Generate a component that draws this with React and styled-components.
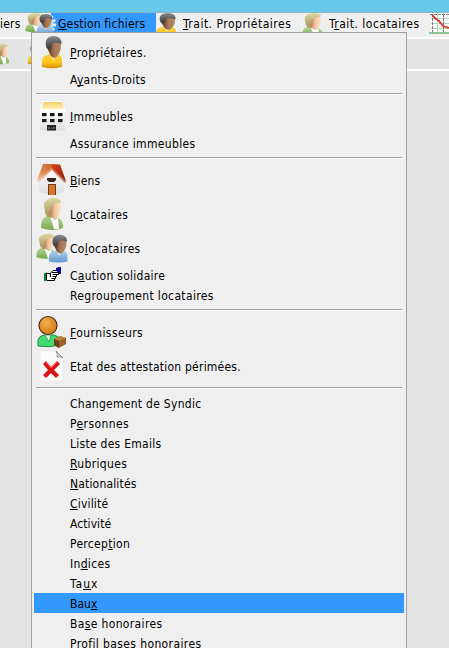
import React from "react";
import styled, { createGlobalStyle } from "styled-components";

const GlobalStyle = createGlobalStyle`
  * { box-sizing: border-box; }
  body { margin: 0; overflow: hidden; background: #e4e4e4; }
`;

const Window = styled.div`
  position: relative;
  width: 449px;
  height: 648px;
  overflow: hidden;
  background: #e4e4e4;
  color: #000;
  font: 12px/22px "DejaVu Sans Condensed", "DejaVu Sans", sans-serif;
  font-stretch: condensed;
  white-space: nowrap;
`;
const TitleStrip = styled.div`
  height: 13px;
  background: #66c9e9;
  border-bottom: 1px solid #8fb4c4;
`;
const MenuBar = styled.div`
  display: flex;
  height: 20px;
  background: #efefef;
`;
const BarCell = styled.div`
  flex: none;
  width: ${(p) => p.$w}px;
  height: 20px;
  padding-left: ${(p) => p.$pad || 0}px;
  overflow: ${(p) => (p.$spill ? "visible" : "hidden")};
  background: ${(p) => (p.$active ? "#3399ff" : "transparent")};
  letter-spacing: ${(p) => p.$ls || 0}px;
  svg { display: block; position: relative; }
`;
const BarGap = styled.div`
  height: 4px;
  background: #efefef;
`;
const ToolBar = styled.div`
  display: flex;
  height: 34px;
  border-top: 2px solid #fff;
  border-bottom: 2px solid #fff;
  svg { flex: none; margin-top: 4px; }
`;
const ToolSlot = styled.div`
  width: ${(p) => p.$w}px;
  overflow: hidden;
`;
const Menu = styled.div`
  position: absolute;
  left: 31px;
  top: 32px;
  width: 376px;
  height: 640px;
  padding: 2px;
  background: #efefef;
  border: 1px solid #a0a0a0;
`;
const Row = styled.div`
  display: flex;
  height: ${(p) => (p.$tall ? 34 : 20)}px;
  line-height: ${(p) => (p.$tall ? 36 : 22)}px;
  background: ${(p) => (p.$active ? "#3399ff" : "transparent")};
`;
const IconCell = styled.div`
  flex: none;
  width: 36px;
  height: 100%;
  padding-left: 2px;
  svg { display: block; }
`;
const Label = styled.span`
  letter-spacing: ${(p) => p.$ls}px;
`;
const Key = styled.span`
  text-decoration: underline;
  text-decoration-thickness: 1px;
  text-underline-offset: 1px;
  text-decoration-skip-ink: none;
`;
const Separator = styled.div`
  height: 10px;
  padding: 4px 2px 0;
  &::before {
    content: "";
    display: block;
    height: 1px;
    background: #a0a0a0;
    box-shadow: 0 1px #fff;
  }
`;
const GradientStore = styled.svg`
  position: absolute;
`;

const Gradients = () => (
  <GradientStore width="0" height="0">
    <defs>
      <linearGradient id="darkSkin"><stop offset="0" stopColor="#4e2d1c" /><stop offset=".55" stopColor="#a87959" /><stop offset="1" stopColor="#b58765" /></linearGradient>
      <linearGradient id="fairSkin"><stop offset="0" stopColor="#ad714e" /><stop offset=".5" stopColor="#f2c7a0" /><stop offset="1" stopColor="#ffe3c4" /></linearGradient>
      <linearGradient id="darkHair" x2="0" y2="1"><stop offset="0" stopColor="#8c8c8c" /><stop offset="1" stopColor="#303134" /></linearGradient>
      <linearGradient id="blond" x2="0" y2="1"><stop offset="0" stopColor="#ded9a5" /><stop offset="1" stopColor="#a9975c" /></linearGradient>
      <linearGradient id="gold" x2="0" y2="1"><stop offset="0" stopColor="#f7cf53" /><stop offset=".6" stopColor="#fcc71f" /><stop offset="1" stopColor="#d38f00" /></linearGradient>
      <linearGradient id="green" x2="0" y2="1"><stop offset="0" stopColor="#bad99a" /><stop offset="1" stopColor="#78a94e" /></linearGradient>
      <linearGradient id="blue" x2="0" y2="1"><stop offset="0" stopColor="#b9d7f2" /><stop offset="1" stopColor="#6297cc" /></linearGradient>
      <linearGradient id="roofYellow" x2="0" y2="1"><stop offset="0" stopColor="#f6cf6c" /><stop offset="1" stopColor="#fff0b4" /></linearGradient>
      <linearGradient id="wall" x2="0" y2="1"><stop offset="0" stopColor="#fff" /><stop offset="1" stopColor="#dcdcdf" /></linearGradient>
      <linearGradient id="roofOrange" x1="1" y1="0" x2="0" y2="1"><stop offset="0" stopColor="#c8642c" /><stop offset=".55" stopColor="#e08a50" /><stop offset="1" stopColor="#f3c29c" /></linearGradient>
      <linearGradient id="roofRed" x2="1" y2="1"><stop offset="0" stopColor="#d8451c" /><stop offset="1" stopColor="#861706" /></linearGradient>
      <radialGradient id="orangeHead" cx=".4" cy=".35"><stop offset="0" stopColor="#f7b24f" /><stop offset="1" stopColor="#dd8422" /></radialGradient>
    </defs>
  </GradientStore>
);

const OwnerShape = ({ coat = "gold" }) => (
  <g>
    <path d="M6 32V26q0-5 5-6l5-2 6 1q4 2 4 6v7q-10 2.500-20 0z" fill={`url(#${coat})`} />
    <path d="M14 19l3 6 5-6z" fill="#fff4c8" />
    <path d="M11 9q0-6 7-6 7 0 7 7 0 9-6 13-4 0-6-6-2-3-2-8z" fill="url(#darkSkin)" />
    <path d="M10.500 13Q8 5 13 2q5-2 9 0 4 2 3.500 7-5-2-9-1l-2 7-1-2-1 1z" fill="url(#darkHair)" />
  </g>
);
const TenantShape = () => (
  <g>
    <path d="M5 31q0-9 4-11l7-2 6 3q5 1 5 10-11 4-22 0z" fill="url(#green)" />
    <path d="M14 19l5 4 3-2 1 11h-5z" fill="#fff" />
    <path d="M9 16q-1-9 2-13l6-2 6 2v13l-4 5-8-1z" fill="url(#blond)" />
    <path d="M13 11q2-6 6-7 6 1 6 6 0 8-5 12-6-1-7-6z" fill="url(#fairSkin)" />
    <path d="M8 6q4-6 12-5 6 1 4.500 5-7-1-10 5l-1 7q-6-3-5.500-12z" fill="url(#blond)" />
  </g>
);
const Icon = ({ children, w = 32, h = 34, box = "0 0 32 34" }) => (
  <svg width={w} height={h} viewBox={box} preserveAspectRatio="none">{children}</svg>
);
const OwnerIcon = (p) => <Icon {...p}><OwnerShape /></Icon>;
const TenantIcon = (p) => <Icon {...p}><TenantShape /></Icon>;
const PairShapes = () => (
  <>
    <g transform="translate(-4 2) scale(.88 .78)"><TenantShape /></g>
    <g transform="translate(7.500 3) scale(.92 .86)"><OwnerShape coat="blue" /></g>
  </>
);
const PairIcon = () => <Icon><PairShapes /></Icon>;
const GearPairIcon = () => (
  <svg width="31" height="20" viewBox="0 0 31 20">
    <rect x="26" width="5" height="20" fill="#3399ff" />
    <circle cx="20" cy="11" r="9.500" fill="none" stroke="#edf5ff" strokeWidth="3" strokeDasharray="2.500 1.700" />
    <circle cx="20" cy="11" r="8.500" fill="#c9e0f5" />
    <g transform="translate(0 -2) scale(.88 .76)"><PairShapes /></g>
  </svg>
);
const BuildingIcon = () => (
  <Icon>
    <path d="M4 10h25v21q-12 2-25 0z" fill="url(#wall)" />
    <path d="M7 2h19l3 9H4z" fill="#fff" />
    <path d="M7.500 3h18.500l2 7H5.500z" fill="url(#roofYellow)" />
    {[14, 20].map((y) => [6, 14, 22].map((x) => (
      <g key={`${x}-${y}`}><rect x={x} y={y} width="4.500" height="3" fill="#191919" /><path d={`M${x} ${y + 3.5}h4.500`} stroke="#bbb" strokeWidth=".7" /></g>
    )))}
    <rect x="11" y="26" width="9" height="5.500" fill="#222" />
    <path d="M12 29h2m1 0h1m1 0h2" stroke="#999" />
  </Icon>
);
const HouseIcon = () => (
  <Icon>
    <path d="M3 17L16 6l12 11v12l-11 3.500L3 29z" fill="url(#wall)" />
    <path d="M7 1h9v6L3 19l-2-2z" fill="url(#roofOrange)" />
    <path d="M16 1l8 .5L30 18l-1.500 1.500L16 7z" fill="url(#roofRed)" />
    <path d="M1 17l2 2L16 7l12.500 12.500L30 18 16 5z" fill="#f6dccb" fillOpacity=".45" />
    <path d="M11 15h9v2l-2 2h-5l-2-2z" fill="#3c251f" />
    <rect x="12" y="21" width="8" height="11" fill="#763817" />
    <rect x="13" y="22" width="6" height="10" fill="#d47631" />
  </Icon>
);
const HandIcon = () => (
  <Icon h={20} box="0 0 32 20">
    <path d="M20 3l3-1h2v7h-2l-3-3z" fill="#0505a0" />
    <rect x="8" y="8" width="2" height="8" fill="#118329" />
    <path d="M11 8h3l3-3h4v2h-3l5 1v2h-2v2h-1v2h-2v2h-8z" fill="#fff" />
    <path d="M10.500 7.500v8M11 8.500h3l3-3h4M16 7.500h6.500v2h-6M20.500 9.500v2h-4M19.500 11.500v2h-4M18.500 13.500v2H11M14.500 8v4" fill="none" stroke="#000" />
  </Icon>
);
const SupplierIcon = () => (
  <Icon>
    <path d="M2 31V25q1-4 6-5h10q5 1 6 5v5q-11 3-22 1z" fill="#45da70" stroke="#248b42" />
    <path d="M9 20l4 7 2-7z" fill="#d8ffe2" stroke="#348b48" strokeWidth=".7" />
    <circle cx="12" cy="10.500" r="9" fill="url(#orangeHead)" stroke="#49301a" strokeWidth="1.200" />
    <path d="M18 24l6-3 6 2v6l-7 4-5-3z" fill="#996127" />
    <path d="M18 24l5 2 7-3-6-2z" fill="#b9843e" />
    <path d="M23 26v7l-5-3v-6z" fill="#6e401b" />
  </Icon>
);
const ExpiredIcon = () => (
  <Icon>
    <path d="M4 2h17l6 7v23H4z" fill="#fbfbfb" stroke="#e3e3e3" strokeWidth=".5" />
    <path d="M20 2q2 4 1 6 4-1 6 1z" fill="#d9d9d9" stroke="#777" strokeWidth=".7" />
    <path d="M10 12l5 6 6-6 3 3-6 6 5 5-3 3-5-5-5 5-3-3 5-5-5-6z" fill="#dc1417" />
    <path d="M10 13l5 6 6-6" fill="none" stroke="#fa5a4e" />
  </Icon>
);
const ChartIcon = () => (
  <svg width="21" height="21" viewBox="0 0 21 21">
    <path d="M2 0h19v19H2z" fill="#fff" />
    <path d="M2 5.500h19M2 10.500h19M2 15.500h19M8.500 0v20M14.500 0v20" stroke="#b4d4b8" />
    <path d="M3.500 1v19M14.500 1v18M1 1.500h20" stroke="#777" strokeDasharray="3 1" />
    <path d="M3 2l4 4 3 2 4 5 6 2" fill="none" stroke="#ce3521" strokeWidth="1.800" />
    <path d="M0 20h21" stroke="#6db67c" strokeWidth="1.500" />
  </svg>
);

const entries = [
  { text: "_Propriétaires.", ls: 0.36, icon: OwnerIcon },
  { text: "A_yants-Droits", ls: 0.3 },
  null,
  { text: "_Immeubles", ls: 0.38, icon: BuildingIcon },
  { text: "Assurance immeubles", ls: 0.34 },
  null,
  { text: "_Biens", ls: 0.15, icon: HouseIcon },
  { text: "L_ocataires", ls: 0.28, icon: TenantIcon },
  { text: "Co_locataires", ls: 0.33, icon: PairIcon },
  { text: "C_aution solidaire", ls: 0.27, icon: HandIcon, short: true },
  { text: "Regroupement locataires", ls: 0.35 },
  null,
  { text: "_Fournisseurs", ls: 0.42, icon: SupplierIcon },
  { text: "Etat des attestation périmées.", ls: 0.23, icon: ExpiredIcon },
  null,
  { text: "Changement de Syndic", ls: 0.28 },
  { text: "P_ersonnes", ls: 0.42 },
  { text: "Liste des Emails", ls: 0.27 },
  { text: "_Rubriques", ls: 0.35 },
  { text: "_Nationalités", ls: 0.17 },
  { text: "_Civilité", ls: 0.18 },
  { text: "Activité", ls: 0.08 },
  { text: "Percep_tion", ls: 0.3 },
  { text: "In_dices", ls: 0.32 },
  { text: "Ta_ux", ls: 1 },
  { text: "Bau_x", ls: 0, active: true },
  { text: "Ba_se honoraires", ls: 0.35 },
  { text: "Profil bases honoraires", ls: 0.39 },
];

const Mnemonic = ({ text }) => {
  const at = text.indexOf("_");
  if (at < 0) return text;
  return <>{text.slice(0, at)}<Key>{text[at + 1]}</Key>{text.slice(at + 2)}</>;
};

export default function App() {
  return (
    <Window>
      <GlobalStyle />
      <Gradients />
      <TitleStrip />
      <MenuBar>
        <BarCell $w={25} $ls={0.2}>iers</BarCell>
        <BarCell $w={31}><GearPairIcon /></BarCell>
        <BarCell $w={100} $pad={2} $ls={0.2} $active><Mnemonic text="_Gestion fichiers" /></BarCell>
        <BarCell $w={27}><OwnerIcon w={20} h={20} box="6 1 20 26" /></BarCell>
        <BarCell $w={119} $ls={0.5}><Mnemonic text="_Trait. Propriétaires" /></BarCell>
        <BarCell $w={27}><TenantIcon w={21} h={20} box="5 1 22 26" /></BarCell>
        <BarCell $w={100} $ls={0.48}><Mnemonic text="T_rait. locataires" /></BarCell>
        <BarCell $w={20} $spill><ChartIcon /></BarCell>
      </MenuBar>
      <BarGap />
      <ToolBar>
        <ToolSlot $w={28}><TenantIcon w={9} h={22} box="13 0 14 34" /></ToolSlot>
        <OwnerIcon w={13} h={22} box="6 0 20 34" />
      </ToolBar>
      <Menu>
        {entries.map((e, i) =>
          e ? (
            <Row key={i} $tall={e.icon && !e.short} $active={e.active}>
              <IconCell>{e.icon && <e.icon />}</IconCell>
              <Label $ls={e.ls}><Mnemonic text={e.text} /></Label>
            </Row>
          ) : (
            <Separator key={i} />
          )
        )}
      </Menu>
    </Window>
  );
}
